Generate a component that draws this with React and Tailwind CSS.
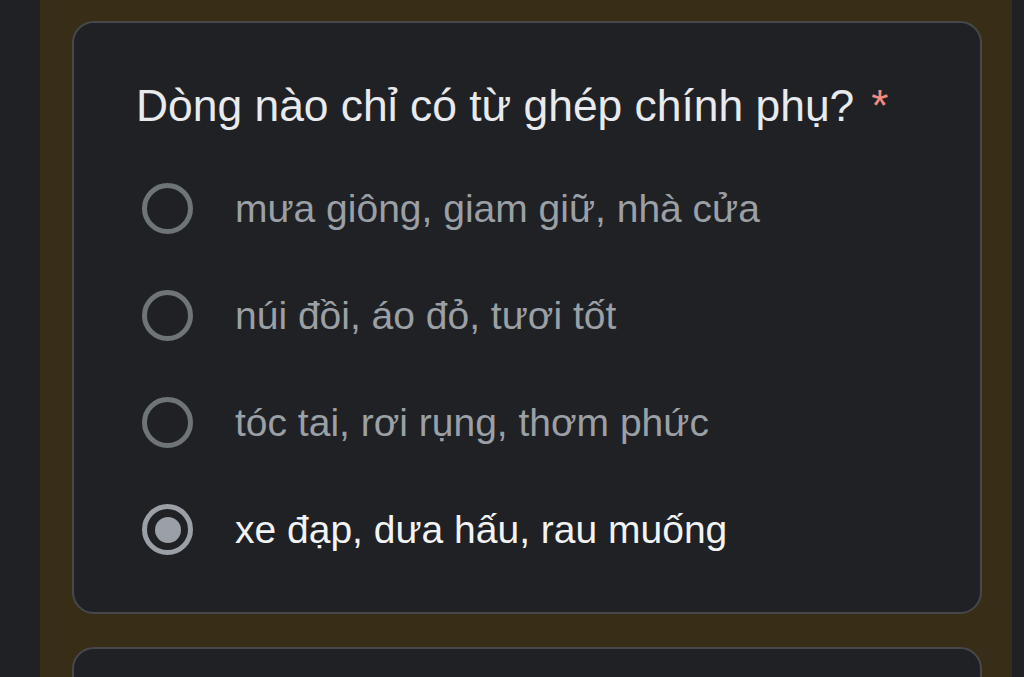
import React from "react";

const options = [
  { label: "mưa giông, giam giữ, nhà cửa", selected: false },
  { label: "núi đồi, áo đỏ, tươi tốt", selected: false },
  { label: "tóc tai, rơi rụng, thơm phức", selected: false },
  { label: "xe đạp, dưa hấu, rau muống", selected: true },
];

function Radio({ selected }) {
  return (
    <div
      className={
        "w-[51px] h-[51px] rounded-full border-[5px] flex items-center justify-center shrink-0 " +
        (selected ? "border-[#9aa0a6]" : "border-[#6f7479]")
      }
    >
      {selected && <div className="w-[26px] h-[26px] rounded-full bg-[#9aa0a6]" />}
    </div>
  );
}

export default function App() {
  return (
    <div
      className="w-[1024px] h-[677px] overflow-hidden bg-[#202125] flex pl-[40px]"
      style={{ fontFamily: '"Liberation Sans", Arial, sans-serif' }}
    >
      <div className="w-[972px] h-full bg-[#382e17] flex flex-col gap-[33px] px-[32px] pt-[21px]">
        <div className="w-[910px] h-[593px] shrink-0 rounded-[22px] border-2 border-[#47484c] bg-[#202125] pl-[62px] pt-[57px]">
          <div className="text-[44.4px] leading-[52px] text-[#e8eaed] flex items-start">
            <span>Dòng nào chỉ có từ ghép chính phụ?</span>
            <span className="text-[#f28b82] text-[44px] leading-[52px] ml-[17px]">*</span>
          </div>
          <div className="mt-[23px] flex flex-col pl-[6px]">
            {options.map((o) => (
              <div key={o.label} className="h-[107px] flex items-center gap-[42px]">
                <Radio selected={o.selected} />
                <span
                  className={
                    "text-[39px] leading-[48px] " +
                    (o.selected ? "text-[#f1f3f4]" : "text-[#9aa0a6]")
                  }
                >
                  {o.label}
                </span>
              </div>
            ))}
          </div>
        </div>
        <div className="w-[910px] h-[200px] shrink-0 rounded-[22px] border-2 border-[#47484c] bg-[#202125]" />
      </div>
    </div>
  );
}
